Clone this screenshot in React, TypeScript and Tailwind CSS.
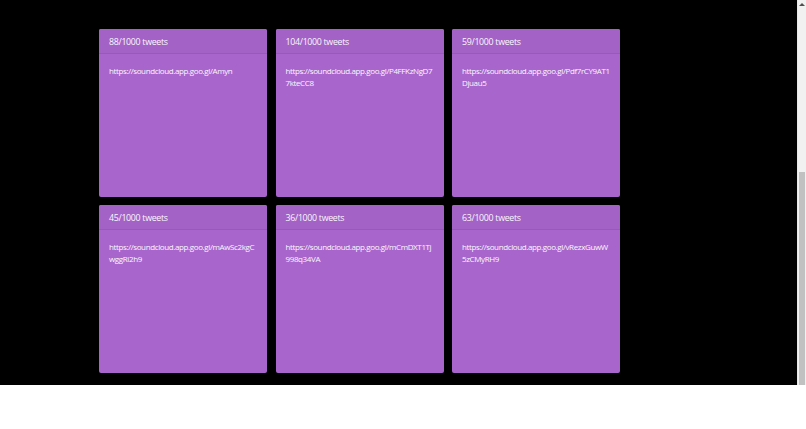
const CARDS = [
  { count: 88, url: 'https://soundcloud.app.goo.gl/Amyn' },
  { count: 104, url: 'https://soundcloud.app.goo.gl/P4FFKzNgD77kteCC8' },
  { count: 59, url: 'https://soundcloud.app.goo.gl/Pdf7rCY9AT1Djuau5' },
  { count: 45, url: 'https://soundcloud.app.goo.gl/mAwSc2kgCwggRi2h9' },
  { count: 36, url: 'https://soundcloud.app.goo.gl/mCmDXT1Tj998q34VA' },
  { count: 63, url: 'https://soundcloud.app.goo.gl/vRezxGuwW5zCMyRH9' },
];

function TweetCard({ count, url }: { count: number; url: string }) {
  return (
    <div className="h-[168px] bg-[#a866cc] rounded-[2px] flex flex-col overflow-hidden text-[#fbf6fd]">
      <div className="h-[25px] px-[10px] pt-px flex items-center bg-[#a262c6] border-b border-[#9a58bd] text-[8.8px] leading-[12px] tracking-[-0.3px]">
        {count}/1000 tweets
      </div>
      <div className="px-[10px] pt-[11px] text-[8px] leading-[11.5px] tracking-[-0.38px] break-all">{url}</div>
    </div>
  );
}

export default function App() {
  return (
    <div className="w-[806px] h-[429px] flex flex-col bg-white font-['Open_Sans','Noto_Sans',sans-serif]">
      <div className="h-[385px] flex">
        <div className="flex-1 bg-black pl-[99px] pt-[29px]">
          <div className="grid grid-cols-[repeat(3,168px)] gap-x-[8.5px] gap-y-[8px]">
            {CARDS.map(c => <TweetCard key={c.url} {...c} />)}
          </div>
        </div>
        {/* fake scrollbar */}
        <div className="w-[9px] bg-[#f1f1f1] border-l border-[#e8e8e8] flex flex-col">
          <div className="h-[9px] flex items-center justify-center">
            <div className="w-0 h-0 border-x-[3px] border-x-transparent border-b-[3px] border-b-[#505050]" />
          </div>
          <div className="h-[163px]" />
          <div className="flex-1 mx-[1px] bg-[#c1c1c1]" />
        </div>
      </div>
    </div>
  );
}
